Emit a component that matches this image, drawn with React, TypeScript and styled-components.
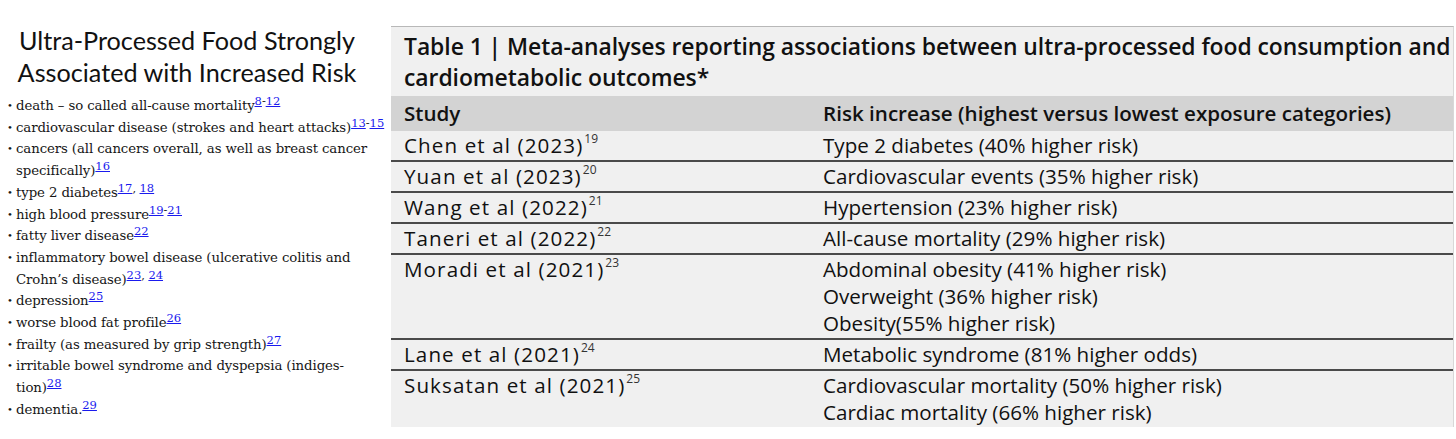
import * as React from 'react';
import styled, { createGlobalStyle } from 'styled-components';

type Ref = { sep?: string; label: string };
type Item = { lines: string[]; refs: Ref[] };

const items: Item[] = [
  { lines: ['death – so called all-cause mortality'], refs: [{ label: '8' }, { sep: '-', label: '12' }] },
  { lines: ['cardiovascular disease (strokes and heart attacks)'], refs: [{ label: '13' }, { sep: '-', label: '15' }] },
  { lines: ['cancers (all cancers overall, as well as breast cancer', 'specifically)'], refs: [{ label: '16' }] },
  { lines: ['type 2 diabetes'], refs: [{ label: '17' }, { sep: ', ', label: '18' }] },
  { lines: ['high blood pressure'], refs: [{ label: '19' }, { sep: '-', label: '21' }] },
  { lines: ['fatty liver disease'], refs: [{ label: '22' }] },
  {
    lines: ['inflammatory bowel disease (ulcerative colitis and', 'Crohn’s disease)'],
    refs: [{ label: '23' }, { sep: ', ', label: '24' }],
  },
  { lines: ['depression'], refs: [{ label: '25' }] },
  { lines: ['worse blood fat profile'], refs: [{ label: '26' }] },
  { lines: ['frailty (as measured by grip strength)'], refs: [{ label: '27' }] },
  { lines: ['irritable bowel syndrome and dyspepsia (indiges-', 'tion)'], refs: [{ label: '28' }] },
  { lines: ['dementia.'], refs: [{ label: '29' }] },
];

type Row = { study: string; ref: string; outcomes: string[] };

const rows: Row[] = [
  { study: 'Chen et al (2023)', ref: '19', outcomes: ['Type 2 diabetes (40% higher risk)'] },
  { study: 'Yuan et al (2023)', ref: '20', outcomes: ['Cardiovascular events (35% higher risk)'] },
  { study: 'Wang et al (2022)', ref: '21', outcomes: ['Hypertension (23% higher risk)'] },
  { study: 'Taneri et al (2022)', ref: '22', outcomes: ['All-cause mortality (29% higher risk)'] },
  {
    study: 'Moradi et al (2021)',
    ref: '23',
    outcomes: ['Abdominal obesity (41% higher risk)', 'Overweight (36% higher risk)', 'Obesity(55% higher risk)'],
  },
  { study: 'Lane et al (2021)', ref: '24', outcomes: ['Metabolic syndrome (81% higher odds)'] },
  {
    study: 'Suksatan et al (2021)',
    ref: '25',
    outcomes: ['Cardiovascular mortality (50% higher risk)', 'Cardiac mortality (66% higher risk)'],
  },
];

export default function App() {
  return (
    <>
      <GlobalStyle />
      <Page>
        <Summary>
          <SummaryTitle>
            Ultra-Processed Food Strongly
            <br />
            Associated with Increased Risk
          </SummaryTitle>
          <RiskList>
            {items.map((item, index) => (
              <RiskItem key={index}>
                {item.lines.map((line, i) => (
                  <React.Fragment key={i}>
                    {i > 0 && <br />}
                    {line}
                  </React.Fragment>
                ))}
                {item.refs.map((ref, i) => (
                  <React.Fragment key={i}>
                    {ref.sep && <RefSep>{ref.sep}</RefSep>}
                    <RefLink href='#'>{ref.label}</RefLink>
                  </React.Fragment>
                ))}
              </RiskItem>
            ))}
          </RiskList>
        </Summary>
        <TablePanel>
          <Caption>
            Table 1 | Meta-analyses reporting associations between ultra-processed food consumption and
            <br />
            cardiometabolic outcomes*
          </Caption>
          <DataTable>
            <thead>
              <tr>
                <HeadCell>Study</HeadCell>
                <HeadCell>Risk increase (highest versus lowest exposure categories)</HeadCell>
              </tr>
            </thead>
            <tbody>
              {rows.map((row, index) => (
                <BodyRow key={index} $first={index === 0}>
                  <StudyCell>
                    {row.study}
                    <Sup>{row.ref}</Sup>
                  </StudyCell>
                  <OutcomeCell>
                    {row.outcomes.map((o, i) => (
                      <div key={i}>{o}</div>
                    ))}
                  </OutcomeCell>
                </BodyRow>
              ))}
            </tbody>
          </DataTable>
        </TablePanel>
      </Page>
    </>
  );
}

const GlobalStyle = createGlobalStyle`
  html, body {
    margin: 0;
    padding: 0;
    background: #ffffff;
  }
`;

const Page = styled.div`
  display: flex;
  align-items: flex-start;
  width: 1456px;
  height: 439px;
  overflow: hidden;
  background: #ffffff;
`;

const Summary = styled.section`
  width: 391px;
  flex-shrink: 0;
  padding-top: 24px;
`;

const SummaryTitle = styled.h1`
  width: 374px;
  margin: 0;
  text-align: center;
  font-family: Lato, 'Open Sans', sans-serif;
  font-weight: 400;
  font-size: 25.2px;
  line-height: 32px;
  color: #111;
`;

const RiskList = styled.ul`
  list-style: none;
  margin: 7px 0 0;
  padding: 0 0 0 16px;
  font-family: 'DejaVu Serif', serif;
  font-size: 13.3px;
  line-height: 21.7px;
  letter-spacing: -0.1px;
  color: #161616;
  white-space: nowrap;
`;

const RiskItem = styled.li`
  position: relative;

  &::before {
    content: '•';
    position: absolute;
    left: -9px;
    font-size: 10px;
  }
`;

const RefLink = styled.a`
  color: #1a1aee;
  text-decoration: underline;
  font-size: 11.5px;
  vertical-align: 5px;
  line-height: 0;
  letter-spacing: 0;
`;

const RefSep = styled.span`
  font-size: 11.5px;
  vertical-align: 5px;
  line-height: 0;
`;

const TablePanel = styled.section`
  width: 1062px;
  margin-top: 26px;
  background: #f0f0f0;
  border-top: 1px solid #b8b8b8;
  border-right: 1px solid #d8d8d8;
  font-family: 'Open Sans', 'Noto Sans', sans-serif;
  color: #111;
`;

const Caption = styled.h2`
  margin: 0;
  padding: 4px 0 3px 13px;
  font-size: 22.9px;
  line-height: 31px;
  font-weight: 600;
  letter-spacing: -0.05px;
  white-space: nowrap;
`;

const DataTable = styled.table`
  width: 100%;
  border-collapse: collapse;
`;

const HeadCell = styled.th`
  background: #d3d3d3;
  text-align: left;
  font-size: 20.6px;
  font-weight: 600;
  line-height: 35px;
  padding: 0 0 0 16px;

  &:first-child {
    width: 403px;
    padding-left: 13px;
  }
`;

const BodyRow = styled.tr<{ $first: boolean }>`
  border-top: ${({ $first }) => ($first ? 'none' : '2px solid #4a4a4a')};

  td {
    vertical-align: top;
    padding: 1px 0 1px 16px;
    font-size: 20.6px;
    line-height: 27px;
    font-weight: 400;
  }
`;

const StudyCell = styled.td`
  && {
    padding-left: 13px;
    letter-spacing: 1.1px;
  }
`;

const OutcomeCell = styled.td``;

const Sup = styled.sup`
  font-size: 12px;
  line-height: 0;
  vertical-align: 10px;
  letter-spacing: 0;
  margin-left: 1px;
  color: #333;
`;
